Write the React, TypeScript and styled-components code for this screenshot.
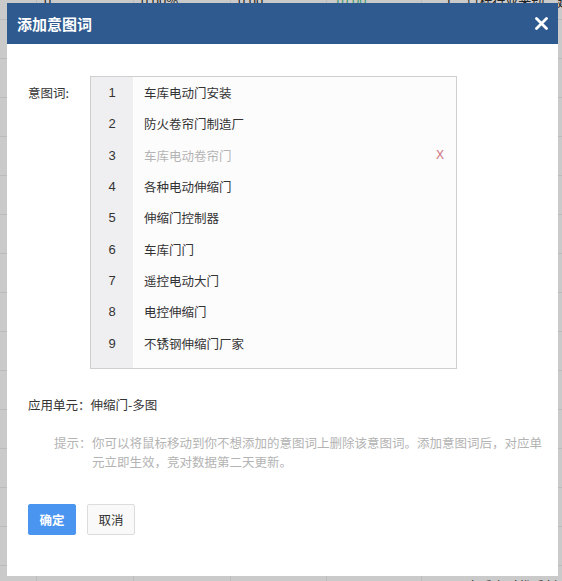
import React from "react";
import styled, { createGlobalStyle } from "styled-components";

const Global = createGlobalStyle`
  html, body { margin: 0; padding: 0; }
  body {
    width: 562px;
    height: 581px;
    overflow: hidden;
    background: #cacaca;
    font-family: "Noto Sans CJK SC", "Noto Sans", sans-serif;
  }
`;

const Page = styled.div`
  position: relative;
  width: 562px;
  height: 581px;
  overflow: hidden;
`;

const Backdrop = styled.div`
  display: flex;
  flex-direction: column;
  margin-top: -19px;
`;

const BgRow = styled.div`
  display: grid;
  grid-template-columns: 36px 97px 97px 96px 95px 1fr;
  height: 39px;
  border-bottom: 1px solid #bbbbbb;
  box-sizing: border-box;
  font-size: 13px;
  color: #222;
`;

const BgCell = styled.div<{ $green?: boolean }>`
  display: flex;
  align-items: center;
  gap: 14px;
  padding-left: 7px;
  border-left: 1px solid #bdbdbd;
  color: ${(p) => (p.$green ? "#3c9a6a" : "#222")};
  white-space: nowrap;
  &:first-child { border-left: none; }
`;

const Dialog = styled.div`
  position: absolute;
  left: 7px;
  top: 3px;
  width: 551px;
  height: 573px;
  background: #fff;
  display: flex;
  flex-direction: column;
`;

const Header = styled.div`
  height: 41px;
  background: #2f5a90;
  display: flex;
  align-items: center;
  justify-content: space-between;
  padding: 0 10px 0 10px;
`;

const Title = styled.div`
  color: #fff;
  font-size: 15px;
  font-weight: 700;
`;

const Close = styled.svg`
  width: 13px;
  height: 13px;
`;

const Body = styled.div`
  display: flex;
  flex-direction: column;
  padding: 32px 0 0 21px;
  color: #333;
`;

const FieldRow = styled.div`
  display: grid;
  grid-template-columns: 62px 367px;
  align-items: start;
`;

const Label = styled.div`
  font-size: 12.5px;
  line-height: 31px;
  padding-top: 1px;
`;

const ListBox = styled.div`
  height: 293px;
  box-sizing: border-box;
  border: 1px solid #cfcfcf;
  background: linear-gradient(to right, #efeff1 42px, #fdfcfd 42px);
  display: flex;
  flex-direction: column;
`;

const Item = styled.div<{ $muted?: boolean }>`
  display: grid;
  grid-template-columns: 42px 1fr auto;
  align-items: center;
  height: 31.3px;
  font-size: 12.5px;
  color: ${(p) => (p.$muted ? "#b4b4b4" : "#333")};
`;

const Num = styled.span`
  text-align: center;
  color: #333;
  font-family: "Liberation Sans", "Noto Sans", sans-serif;
  font-size: 13px;
`;

const Word = styled.span`
  padding-left: 11px;
`;

const Remove = styled.span`
  padding-right: 12px;
  color: #cc6e7c;
  font-family: "Liberation Sans", sans-serif;
  font-size: 12px;
`;

const UnitLine = styled.div`
  margin-top: 26px;
  font-size: 12.5px;
  line-height: 20px;
`;

const Hint = styled.div`
  margin-top: 18px;
  display: grid;
  grid-template-columns: 38px 455px;
  padding-left: 26px;
  font-size: 12.5px;
  line-height: 19px;
  color: #b3b3b3;
  white-space: normal;
`;

const HintLabel = styled.span`
  white-space: nowrap;
`;

const Buttons = styled.div`
  margin-top: 33px;
  display: flex;
  gap: 11px;
`;

const Button = styled.button<{ $primary?: boolean }>`
  width: 48px;
  height: 31px;
  box-sizing: border-box;
  border-radius: 2px;
  font-family: "Noto Sans CJK SC", sans-serif;
  font-size: 12.5px;
  padding: 0;
  border: 1px solid ${(p) => (p.$primary ? "#4a95ef" : "#dcdcdc")};
  background: ${(p) => (p.$primary ? "#4a95ef" : "#f9f9f9")};
  color: ${(p) => (p.$primary ? "#fff" : "#333")};
  font-weight: ${(p) => (p.$primary ? 700 : 400)};
`;

const words = [
  "车库电动门安装",
  "防火卷帘门制造厂",
  "车库电动卷帘门",
  "各种电动伸缩门",
  "伸缩门控制器",
  "车库门门",
  "遥控电动大门",
  "电控伸缩门",
  "不锈钢伸缩门厂家",
];

export default function App() {
  const bgRows = Array.from({ length: 16 });
  return (
    <Page>
      <Global />
      <Backdrop>
        {bgRows.map((_, i) => (
          <BgRow key={i}>
            <BgCell />
            <BgCell>{i === 0 ? "0" : ""}</BgCell>
            <BgCell>{i === 0 ? "0.00%" : ""}</BgCell>
            <BgCell>{i === 0 ? "0.00" : ""}</BgCell>
            <BgCell $green>{i === 0 ? "10.00" : ""}</BgCell>
            <BgCell>
              {i === 0 ? (
                <>
                  <span style={{ paddingLeft: 16 }}>1</span>
                  <span>目标行业来动　建</span>
                </>
              ) : i === 15 ? (
                <>
                  <span style={{ paddingLeft: 16 }}>8</span>
                  <span>高质商对优质创意</span>
                </>
              ) : (
                ""
              )}
            </BgCell>
          </BgRow>
        ))}
      </Backdrop>
      <Dialog>
        <Header>
          <Title>添加意图词</Title>
          <Close viewBox="0 0 13 13">
            <path d="M1.5 1.5 L11.5 11.5 M11.5 1.5 L1.5 11.5" stroke="#fff" strokeWidth="2.8" strokeLinecap="round" />
          </Close>
        </Header>
        <Body>
          <FieldRow>
            <Label>意图词:</Label>
            <ListBox>
              {words.map((w, i) => (
                <Item key={w} $muted={i === 2}>
                  <Num>{i + 1}</Num>
                  <Word>{w}</Word>
                  {i === 2 ? <Remove>X</Remove> : <span />}
                </Item>
              ))}
            </ListBox>
          </FieldRow>
          <UnitLine>应用单元：伸缩门-多图</UnitLine>
          <Hint>
            <HintLabel>提示：</HintLabel>
            <span>你可以将鼠标移动到你不想添加的意图词上删除该意图词。添加意图词后，对应单元立即生效，竞对数据第二天更新。</span>
          </Hint>
          <Buttons>
            <Button $primary>确定</Button>
            <Button>取消</Button>
          </Buttons>
        </Body>
      </Dialog>
    </Page>
  );
}
